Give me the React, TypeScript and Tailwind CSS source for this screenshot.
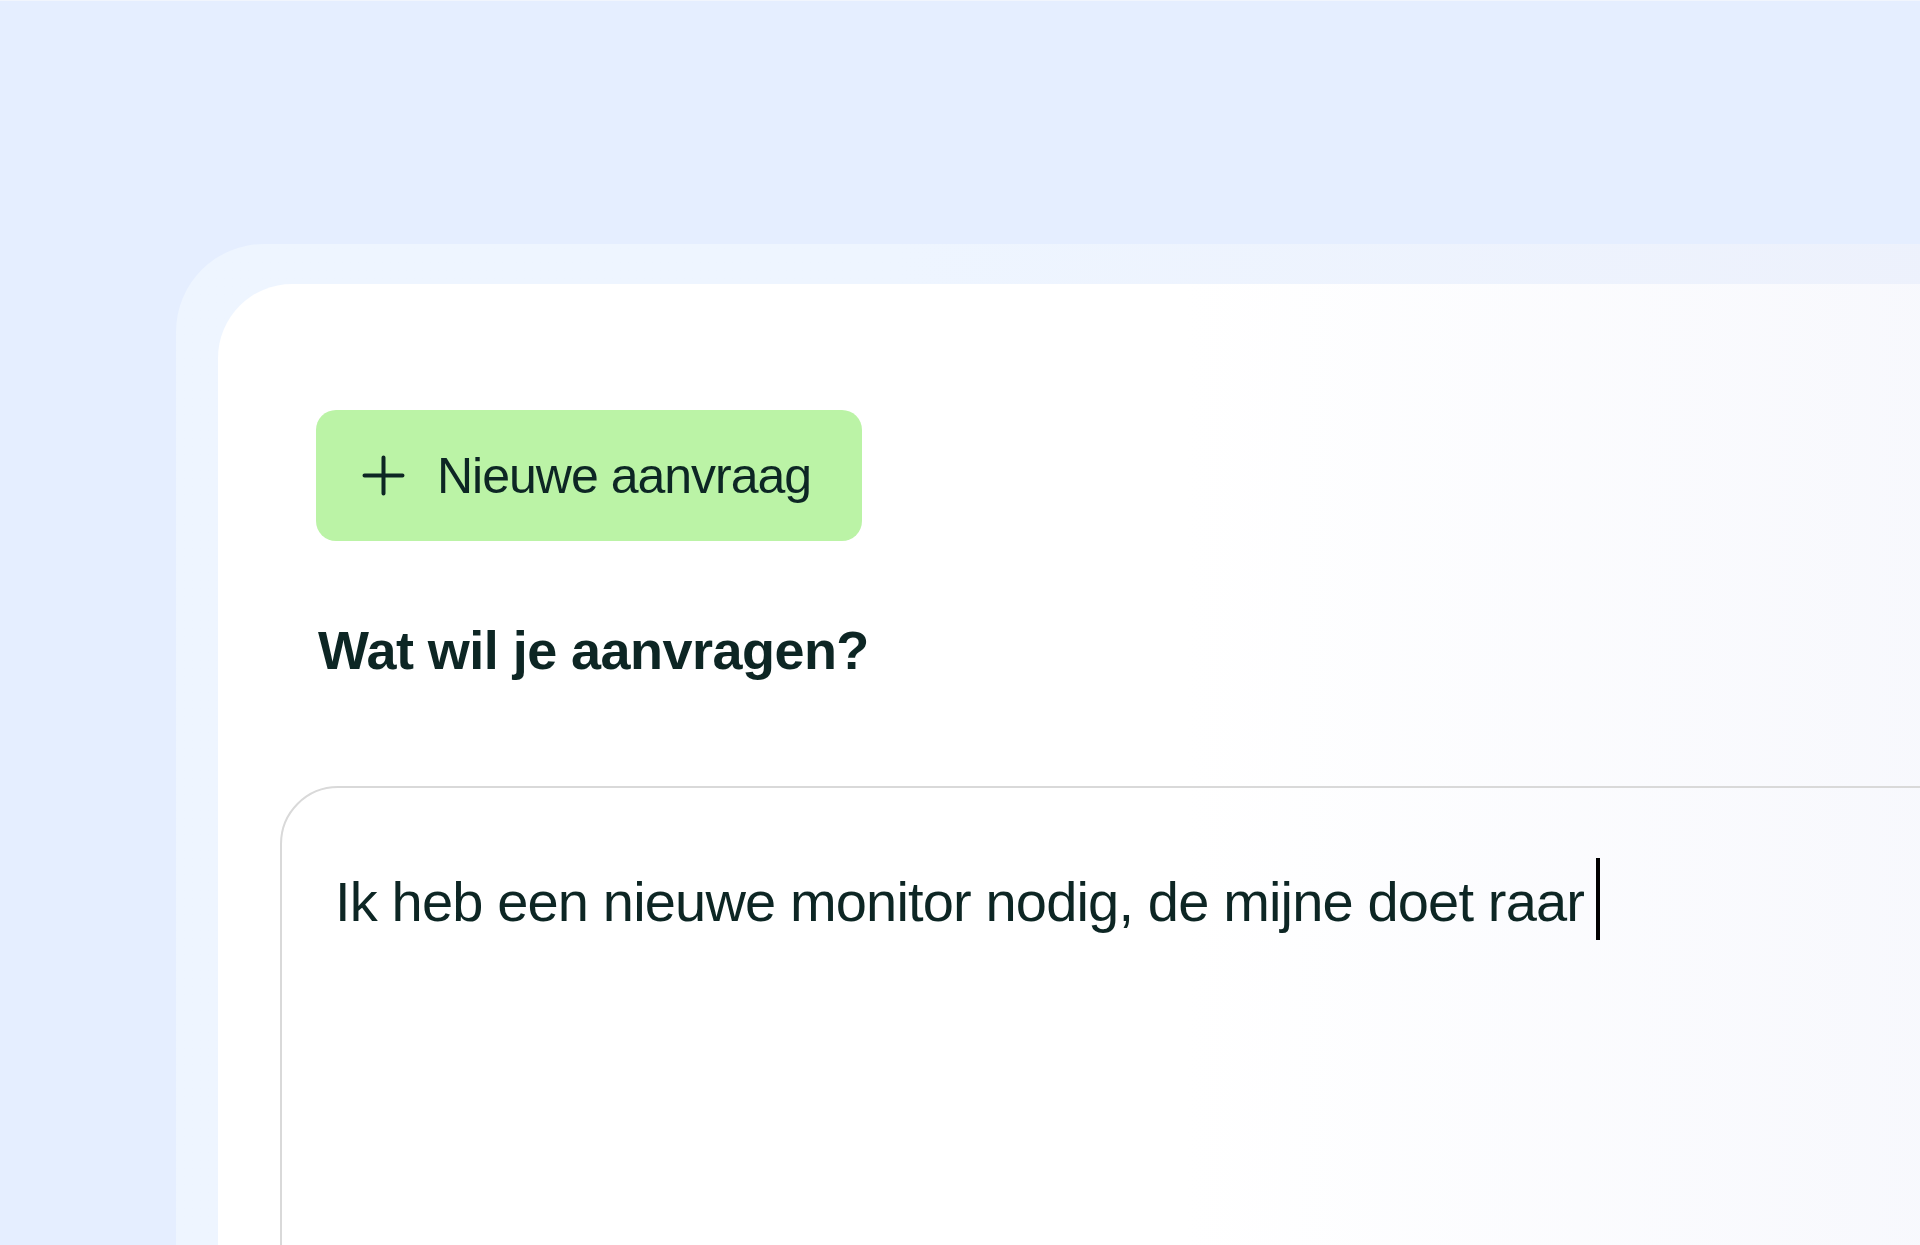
import React from "react";

const font = { fontFamily: '"Liberation Sans", Arial, sans-serif' };

function PlusIcon() {
  return (
    <svg viewBox="0 0 43 41" className="h-[41px] w-[43px] shrink-0" fill="none">
      <path d="M2.5 20.5H40.5M21.5 2.5V38.5" stroke="#0d2624" strokeWidth="4" strokeLinecap="round" />
    </svg>
  );
}

export default function App() {
  return (
    <div
      className="h-[1245px] w-full overflow-hidden border-t border-[#f1f5fd] bg-[#e5eeff] pl-[176px] pt-[243px] text-[#0d2624]"
      style={font}
    >
      {/* outer band */}
      <div className="h-[1100px] w-[1800px] rounded-tl-[88px] bg-linear-to-r from-[#eef5ff] from-40% to-[#edf1fc] pl-[42px] pt-[40px]">
        {/* inner panel */}
        <div className="h-full w-full rounded-tl-[74px] bg-linear-to-r from-white from-55% to-[#f7f8fd] pl-[62px] pt-[126px]">
          <div className="ml-[36px]">
            <button
              type="button"
              className="flex h-[131px] w-[546px] items-center rounded-[20px] bg-[#bbf3a6] pl-[46px]"
            >
              <PlusIcon />
              <span className="ml-[32px] text-[50px] leading-none tracking-[-0.02em] text-[#0d2624]">
                Nieuwe aanvraag
              </span>
            </button>

            <h1 className="mt-[82px] pl-[2px] text-[54px] font-bold leading-none tracking-[-0.01em]">
              Wat wil je aanvragen?
            </h1>
          </div>

          {/* text field */}
          <div className="mt-[109px] h-[600px] w-[1700px] rounded-tl-[58px] border-2 border-[#d9d9d9] pl-[53px] pt-[70px]">
            <div className="flex items-center">
              <span className="pt-[5px] text-[56px] leading-none tracking-[-0.015em]">
                Ik heb een nieuwe monitor nodig, de mijne doet raar
              </span>
              <span className="ml-[12px] h-[82px] w-[4px] bg-black" />
            </div>
          </div>
        </div>
      </div>
    </div>
  );
}
